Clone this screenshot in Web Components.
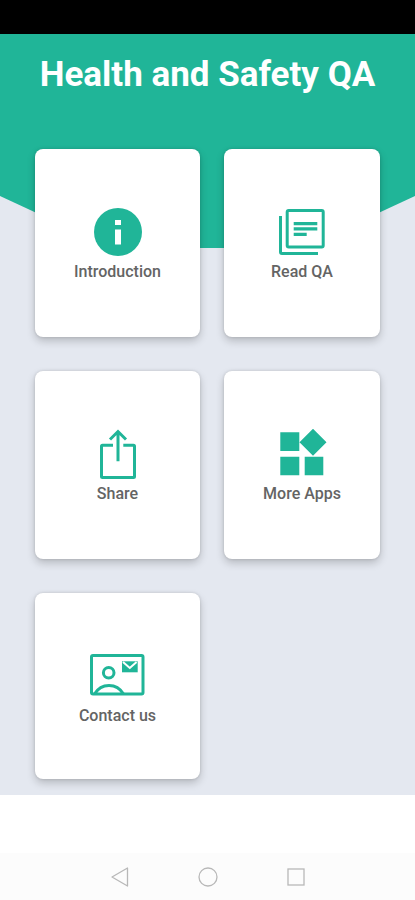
<!DOCTYPE html>
<html lang="en">
<head>
<meta charset="utf-8">
<meta name="viewport" content="width=device-width, initial-scale=1">
<title>Health and Safety QA</title>
<style>
  html, body { margin: 0; min-height: 100%; }
  body {
    background: #fff;
    font-family: Roboto, "Liberation Sans", sans-serif;
    --accent: #20b598;
    --page: #e4e8f0;
    --label: #646464;
  }
</style>
</head>
<body>
<qa-app>
  <qa-menu heading="Health and Safety QA">
    <qa-tile icon="info">Introduction</qa-tile>
    <qa-tile icon="read">Read QA</qa-tile>
    <qa-tile icon="share">Share</qa-tile>
    <qa-tile icon="apps">More Apps</qa-tile>
    <qa-tile icon="contact">Contact us</qa-tile>
  </qa-menu>
  <qa-navbar slot="nav"></qa-navbar>
</qa-app>

<script>
const attach = (el, html) => {
  el.attachShadow({ mode: "open" }).innerHTML = html;
};

const ICONS = {
  info: `<circle cx="30" cy="26" r="24" fill="currentColor"/>
    <path d="M27 14h6v5h-6zM27 23.5h6v15h-6z" fill="#fff"/>`,
  read: `<g fill="none" stroke="currentColor" stroke-width="3">
    <rect x="15.2" y="4.5" width="36" height="36.5" rx="1.5"/>
    <path d="M8.5 10v36q0 1.5 1.5 1.5h36"/></g>
    <path d="M21.7 16h23.6v3.3H21.7zM21.7 21.3h23.6v3.3H21.7zM21.7 26.7h13V30h-13z" fill="currentColor"/>`,
  share: `<g fill="none" stroke="currentColor" stroke-width="3">
    <path d="M25 17.2H14.5q-1 0-1 1v30.3q0 1 1 1h31q1 0 1-1V18.2q0-1-1-1H35.3"/>
    <path d="M30 33.3V3.5M22 11.5l8-8 8 8"/></g>`,
  apps: `<path d="M8.3 4.3h19V23h-19zM8.3 28.7h19v18.6h-19zM32.7 28.7h18.6v18.6H32.7zM41 .8l13.5 13.5L41 27.8 27.5 14.3z" fill="currentColor"/>`,
  contact: `<g fill="none" stroke="currentColor" stroke-width="3">
    <rect x="3.5" y="5.5" width="51.5" height="38.5" rx="1.5"/>
    <circle cx="20.7" cy="22.7" r="5.3"/>
    <path d="M6.5 44c3.5-5.8 8.5-8.5 14.5-8.5s11 2.7 14.5 8.5"/></g>
    <path d="M34 11.3h15.7v11H34z" fill="currentColor"/>
    <path d="M35 12l6.8 6 6.8-6" fill="none" stroke="#fff" stroke-width="2"/>`
};

customElements.define("qa-app", class extends HTMLElement {
  connectedCallback() {
    attach(this, `
      <style>
        :host { display: flex; flex-direction: column; min-height: 100vh; }
        .status { height: 34px; background: #000; }
        .spacer { flex: 1; }
      </style>
      <div class="status"></div>
      <slot></slot>
      <div class="spacer"></div>
      <slot name="nav"></slot>`);
  }
});

customElements.define("qa-menu", class extends HTMLElement {
  connectedCallback() {
    attach(this, `
      <style>
        :host { display: grid; background: var(--page); overflow: hidden; }
        .banner, main { grid-area: 1 / 1; }
        .banner {
          height: 214px;
          background: var(--accent);
          clip-path: polygon(0 0, 100% 0, 100% 162px, calc(100% - 112px) 100%, 112px 100%, 0 162px);
        }
        main { z-index: 1; padding: 21px 35px 16px; }
        h1 {
          margin: 0 -16px 54px;
          color: #fff;
          font-size: 35px;
          line-height: 40px;
          font-weight: 700;
          text-align: center;
        }
        .tiles {
          display: grid;
          grid-template-columns: 165fr 156fr;
          grid-template-rows: 188px 188px;
          grid-auto-rows: minmax(186px, auto);
          gap: 34px 24px;
        }
      </style>
      <div class="banner"></div>
      <main>
        <h1></h1>
        <div class="tiles"><slot></slot></div>
      </main>`);
    this.shadowRoot.querySelector("h1").textContent = this.getAttribute("heading");
  }
});

customElements.define("qa-tile", class extends HTMLElement {
  connectedCallback() {
    attach(this, `
      <style>
        :host { display: grid; }
        button {
          display: flex;
          flex-direction: column;
          align-items: center;
          gap: 4px;
          margin: 0;
          padding: 57px 8px 32px;
          border: 0;
          border-radius: 8px;
          background: #fff;
          color: var(--label);
          font: 500 16px/20px Roboto, "Liberation Sans", sans-serif;
          box-shadow: 0 4px 8px rgba(0, 0, 0, .2), 0 0 3px rgba(0, 0, 0, .14);
          cursor: pointer;
        }
        svg { width: 60px; height: 52px; color: var(--accent); }
      </style>
      <button type="button">
        <svg viewBox="0 0 60 52" aria-hidden="true">${ICONS[this.getAttribute("icon")]}</svg>
        <span><slot></slot></span>
      </button>`);
  }
});

customElements.define("qa-navbar", class extends HTMLElement {
  connectedCallback() {
    attach(this, `
      <style>
        :host { display: block; background: #fcfcfc; }
        nav { display: flex; justify-content: center; gap: 64px; padding: 12px 0 11px; }
        button { display: block; padding: 0; border: 0; background: none; cursor: pointer; }
        svg { display: block; width: 24px; height: 24px; fill: none; stroke: #b8b8b8; stroke-width: 1.3; }
      </style>
      <nav aria-label="System">
        <button type="button" aria-label="Back"><svg viewBox="0 0 24 24"><path d="M19.5 3v18L4 12z" stroke-linejoin="round"/></svg></button>
        <button type="button" aria-label="Home"><svg viewBox="0 0 24 24"><circle cx="12" cy="12" r="9"/></svg></button>
        <button type="button" aria-label="Recent apps"><svg viewBox="0 0 24 24"><rect x="4" y="4" width="16" height="16"/></svg></button>
      </nav>`);
  }
});
</script>
</body>
</html>
